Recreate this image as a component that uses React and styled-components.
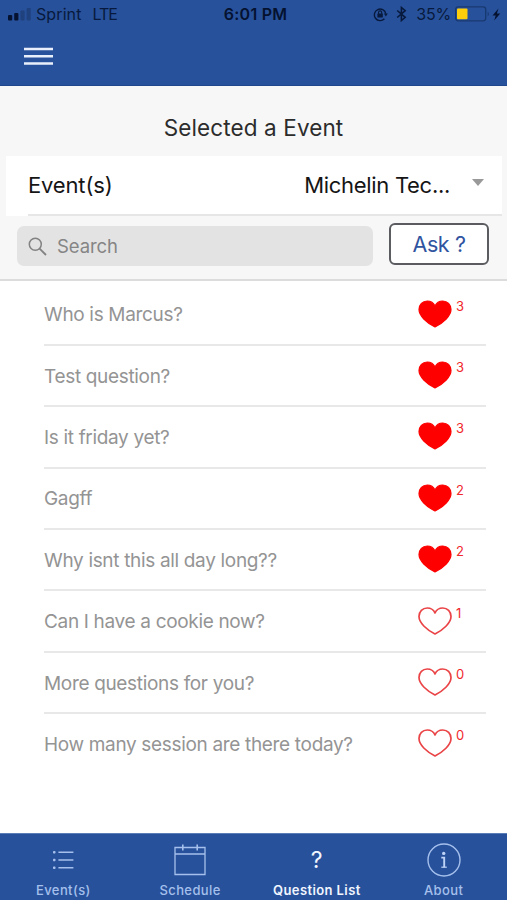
import React from 'react';
import styled, { createGlobalStyle } from 'styled-components';

const GlobalStyle = createGlobalStyle`
  * { box-sizing: border-box; }
  body { margin: 0; background: #fff; }
  button, input { font: inherit; }
`;

const Screen = styled.div`
  display: flex;
  flex-direction: column;
  width: 507px;
  height: 900px;
  overflow: hidden;
  background: #fff;
  font-family: Inter, 'Liberation Sans', sans-serif;
`;

const Header = styled.header`
  flex: none;
  height: 86px;
  background: #28519b;
  border-bottom: 1px solid #20468b;
`;

const StatusBar = styled.div`
  display: grid;
  grid-template-columns: 1fr auto 1fr;
  align-items: center;
  height: 28px;
  padding: 0 6px 0 8px;
  color: #071a3d;
  font-size: 16px;
  line-height: 28px;
`;

const StatusGroup = styled.div`
  display: flex;
  align-items: center;
  justify-content: ${(p) => (p.$end ? 'flex-end' : 'flex-start')};
  svg { flex: none; display: block; }
`;

const Carrier = styled.span`
  margin-left: 4px;
  letter-spacing: 0.1px;
`;

const Network = styled.span`
  margin-left: 11px;
  letter-spacing: -1.1px;
`;

const Clock = styled.span`
  margin-left: 2px;
  color: #041230;
  font-weight: 600;
  letter-spacing: 0.25px;
`;

const Percent = styled.span`
  margin: 0 4px 0 9px;
  letter-spacing: -0.2px;
`;

const MenuButton = styled.button`
  display: block;
  margin: 19px 0 0 23px;
  padding: 0;
  border: 0;
  background: none;
  svg { display: block; }
`;

const Filters = styled.section`
  flex: none;
  height: 195px;
  background: #f7f7f7;
  border-bottom: 2px solid #dcdcdc;
`;

const Title = styled.h1`
  margin: 0;
  padding-top: 27px;
  height: 70px;
  color: #2c2c2c;
  font-size: 22.5px;
  line-height: 30px;
  font-weight: 400;
  letter-spacing: 0.12px;
  text-align: center;
`;

const EventSelect = styled.div`
  height: 60px;
  margin: 0 5px 0 6px;
  padding-left: 22px;
  background: #fff;
`;

const SelectInner = styled.div`
  display: flex;
  align-items: center;
  height: 60px;
  padding-right: 18px;
  border-bottom: 2px solid #e6e6e6;
  color: #151515;
  font-size: 22px;
  letter-spacing: -0.16px;
`;

const SelectValue = styled.span`
  margin-left: auto;
  margin-right: 22px;
  letter-spacing: -0.3px;
`;

const Caret = styled.span`
  margin-bottom: 5px;
  border: 6.5px solid transparent;
  border-top: 7px solid #999;
  border-bottom: 0;
`;

const SearchRow = styled.div`
  display: flex;
  gap: 16px;
  padding: 7px 18px 0 17px;
`;

const SearchBox = styled.label`
  display: flex;
  align-items: center;
  width: 356px;
  height: 40px;
  margin-top: 3px;
  padding-left: 11px;
  border-radius: 7px;
  background: #e3e3e3;
`;

const SearchInput = styled.input`
  width: 290px;
  margin-left: 10px;
  padding: 0;
  border: 0;
  outline: 0;
  background: none;
  font-size: 18.5px;
  letter-spacing: -0.1px;
  &::placeholder { color: #858585; opacity: 1; }
`;

const AskButton = styled.button`
  width: 100px;
  height: 42px;
  padding: 0;
  border: 2px solid #5a5c60;
  border-radius: 6px;
  background: #fff;
  color: #30549f;
  font-size: 21.5px;
  letter-spacing: -0.4px;
`;

const Questions = styled.ul`
  flex: 1;
  margin: 0;
  padding: 3.5px 21px 0 44px;
  list-style: none;
`;

const Question = styled.li`
  display: flex;
  align-items: center;
  height: 61.4px;
  padding-top: 1px;
  border-bottom: 2px solid ${(p) => (p.$last ? 'transparent' : '#e8e8e8')};
  color: #949494;
  font-size: 19px;
  letter-spacing: -0.33px;
`;

const Likes = styled.span`
  display: flex;
  align-items: flex-start;
  width: 68px;
  height: 28px;
  margin: -2px 0 0 auto;
  color: #f0282c;
  font-size: 13px;
  line-height: 12px;
  letter-spacing: 0;
  svg { display: block; margin-right: 3px; }
`;

const TabBar = styled.nav`
  flex: none;
  display: grid;
  grid-template-columns: repeat(4, 1fr);
  height: 67px;
  background: #28519b;
  border-top: 1px solid #5b7db7;
`;

const Tab = styled.div`
  display: flex;
  flex-direction: column;
  align-items: center;
  color: ${(p) => (p.$active ? '#f1f6ff' : '#a5c0ec')};
  font-size: 13px;
  font-weight: ${(p) => (p.$active ? 600 : 500)};
  line-height: 16px;
  letter-spacing: 0.4px;
`;

const TabIcon = styled.span`
  display: flex;
  align-items: center;
  justify-content: center;
  height: 48px;
  padding-top: 3px;
  font-size: 23px;
  font-weight: 400;
`;

const HEART = 'M17 27 C13.8 25.4 9.2 22.5 5.8 19 C2.8 15.9 1 12.9 1 9.6 C1 4.6 4.6 1 9.2 1 C12.9 1 15.7 3 17 6 C18.3 3 21.1 1 24.8 1 C29.4 1 33 4.6 33 9.6 C33 12.9 31.2 15.9 28.2 19 C24.8 22.5 20.2 25.4 17 27 Z';

function Heart({ filled }) {
  return (
    <svg width="35" height="28" viewBox="0 0 35 28">
      <path d={HEART} fill={filled ? '#fe0000' : 'none'} stroke={filled ? '#fe0000' : '#ea4447'} strokeWidth={filled ? 1.2 : 1.7} strokeLinejoin="round" />
    </svg>
  );
}

function MenuIcon() {
  return (
    <svg width="31" height="19" viewBox="0 0 31 19">
      <path d="M1 2 H30 M1 9.2 H30 M1 16.4 H30" stroke="#e9effb" strokeWidth="2.5" />
    </svg>
  );
}

function Signal() {
  return (
    <svg width="24" height="14" viewBox="0 0 24 14">
      <rect x="0" y="8" width="4.2" height="5.5" rx="1" fill="#051331" />
      <rect x="6.2" y="6" width="4.2" height="7.5" rx="1" fill="#051331" />
      <rect x="12.4" y="3.5" width="4.2" height="10" rx="1" fill="#1f427f" />
      <rect x="18.6" y="1" width="4.2" height="12.5" rx="1" fill="#1f427f" />
    </svg>
  );
}

const LockSvg = styled.svg`
  margin-right: 8px;
`;

function RotationLock() {
  return (
    <LockSvg width="15" height="15" viewBox="0 0 15 15" fill="none" stroke="#071a3d">
      <path d="M11.4 11.8 A5.8 5.8 0 1 1 12.8 6.6" strokeWidth="1.4" />
      <path d="M10.9 6.5 H14.8 L12.9 9.4 Z" fill="#071a3d" stroke="none" />
      <rect x="4.4" y="6.6" width="5.4" height="4" rx="0.6" fill="#071a3d" stroke="none" />
      <path d="M5.5 7 V5.5 A1.6 1.6 0 0 1 8.7 5.5 V7" strokeWidth="1.1" />
    </LockSvg>
  );
}

function Bluetooth() {
  return (
    <svg width="11" height="16" viewBox="0 0 11 16" fill="none" stroke="#071a3d" strokeWidth="1.6">
      <path d="M1.2 4.5 L9.2 11.3 L5.4 14.5 V1.5 L9.2 4.7 L1.2 11.5" />
    </svg>
  );
}

function Battery() {
  return (
    <svg width="37" height="16" viewBox="0 0 37 16">
      <rect x="0.7" y="0.8" width="30" height="14" rx="2.5" fill="none" stroke="#183970" strokeWidth="1.3" />
      <rect x="2" y="2.5" width="10.5" height="10.7" rx="1" fill="#ffcf0b" />
      <path d="M32.7 5.5 Q35 8 32.7 10.5 Z" fill="#183970" />
    </svg>
  );
}

function Bolt() {
  return (
    <svg width="9" height="13" viewBox="0 0 9 13">
      <path d="M6.5 0.5 L0.5 7.4 H3.7 L2.2 12.5 L8.3 5.4 H4.9 Z" fill="#051331" />
    </svg>
  );
}

function SearchIcon() {
  return (
    <svg width="19" height="19" viewBox="0 0 19 19" fill="none" stroke="#828282" strokeWidth="1.5">
      <circle cx="7.3" cy="7.3" r="6" />
      <path d="M11.6 11.6 L18 18" strokeWidth="1.8" />
    </svg>
  );
}

function ListIcon() {
  return (
    <svg width="22" height="20" viewBox="0 0 22 20">
      <g fill="#a5c0ec">
        <rect x="1" y="1" width="2.5" height="2.5" rx="0.7" />
        <rect x="1" y="8.7" width="2.5" height="2.5" rx="0.7" />
        <rect x="1" y="16.4" width="2.5" height="2.5" rx="0.7" />
      </g>
      <path d="M6.4 2.3 H21.4 M6.4 10 H21.4 M6.4 17.7 H21.4" stroke="#a5c0ec" strokeWidth="1.4" />
    </svg>
  );
}

function CalendarIcon() {
  return (
    <svg width="32" height="32" viewBox="0 0 32 32" fill="none" stroke="#a5c0ec" strokeWidth="1.3">
      <path d="M1 3.5 H31 V30.5 H1 Z M1 10 H31" />
      <path d="M8.8 0.5 V6.5 M23.2 0.5 V6.5" strokeWidth="1.6" />
    </svg>
  );
}

function InfoIcon() {
  return (
    <svg width="34" height="34" viewBox="0 0 34 34" fill="none" stroke="#a5c0ec">
      <circle cx="17" cy="17" r="16" strokeWidth="1.4" />
      <circle cx="16.7" cy="10.4" r="1.7" fill="#bdd4f8" stroke="none" />
      <path d="M14.3 14.6 H17.2 V24.2" stroke="#bdd4f8" strokeWidth="1.9" />
      <path d="M14.3 24.2 H19.8" stroke="#bdd4f8" strokeWidth="1.2" />
    </svg>
  );
}

const QUESTIONS = [
  ['Who is Marcus?', 3, true],
  ['Test question?', 3, true],
  ['Is it friday yet?', 3, true],
  ['Gagff', 2, true],
  ['Why isnt this all day long??', 2, true],
  ['Can I have a cookie now?', 1, false],
  ['More questions for you?', 0, false],
  ['How many session are there today?', 0, false],
];

const TABS = [
  ['Event(s)', <ListIcon />],
  ['Schedule', <CalendarIcon />],
  ['Question List', '?'],
  ['About', <InfoIcon />],
];

export default function App() {
  return (
    <Screen>
      <GlobalStyle />
      <Header>
        <StatusBar>
          <StatusGroup>
            <Signal />
            <Carrier>Sprint</Carrier>
            <Network>LTE</Network>
          </StatusGroup>
          <Clock>6:01 PM</Clock>
          <StatusGroup $end>
            <RotationLock />
            <Bluetooth />
            <Percent>35%</Percent>
            <Battery />
            <Bolt />
          </StatusGroup>
        </StatusBar>
        <MenuButton aria-label="Menu">
          <MenuIcon />
        </MenuButton>
      </Header>
      <Filters>
        <Title>Selected a Event</Title>
        <EventSelect>
          <SelectInner>
            <span>Event(s)</span>
            <SelectValue>Michelin Tec...</SelectValue>
            <Caret />
          </SelectInner>
        </EventSelect>
        <SearchRow>
          <SearchBox>
            <SearchIcon />
            <SearchInput placeholder="Search" />
          </SearchBox>
          <AskButton>Ask ?</AskButton>
        </SearchRow>
      </Filters>
      <Questions>
        {QUESTIONS.map(([text, count, liked], i) => (
          <Question key={text} $last={i === QUESTIONS.length - 1}>
            <span>{text}</span>
            <Likes>
              <Heart filled={liked} />
              {count}
            </Likes>
          </Question>
        ))}
      </Questions>
      <TabBar>
        {TABS.map(([label, icon]) => (
          <Tab key={label} $active={label === 'Question List'}>
            <TabIcon>{icon}</TabIcon>
            {label}
          </Tab>
        ))}
      </TabBar>
    </Screen>
  );
}
